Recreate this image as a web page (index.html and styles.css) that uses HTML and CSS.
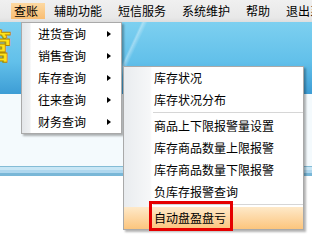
FILE: index.html
```html
<!DOCTYPE html>
<html lang="zh-CN">
<head>
<meta charset="utf-8">
<link rel="stylesheet" href="styles.css">
</head>
<body>
<div class="page">
  <div class="menubar">
    <span class="mi active">查账</span>
    <span class="mi">辅助功能</span>
    <span class="mi">短信服务</span>
    <span class="mi">系统维护</span>
    <span class="mi">帮助</span>
    <span class="mi">退出系统</span>
  </div>
  <div class="banner"><div class="logo-clip"><span class="logo">管</span></div></div>
  <div class="content"></div>
  <div class="bar"></div>

  <div class="menu m1">
    <div class="row sub">进货查询</div>
    <div class="row sub">销售查询</div>
    <div class="row sub">库存查询</div>
    <div class="row sub">往来查询</div>
    <div class="row sub">财务查询</div>
  </div>

  <div class="menu m2">
    <div class="row">库存状况</div>
    <div class="row">库存状况分布</div>
    <div class="sep"></div>
    <div class="row">商品上下限报警量设置</div>
    <div class="row">库存商品数量上限报警</div>
    <div class="row">库存商品数量下限报警</div>
    <div class="row">负库存报警查询</div>
    <div class="sep"></div>
    <div class="row hl">自动盘盈盘亏</div>
  </div>

  <div class="mark"></div>
</div>
</body>
</html>
```

FILE: styles.css
```css
html, body {
  margin: 0;
  padding: 0;
  background: #ffffff;
}
.page {
  position: relative;
  width: 312px;
  height: 238px;
  overflow: hidden;
  font-family: "Noto Sans CJK SC", "Noto Sans", sans-serif;
  font-size: 12px;
  color: #000;
}
.menubar {
  height: 22px;
  box-sizing: border-box;
  padding: 3px 0 0 11px;
  display: flex;
  gap: 6px;
  white-space: nowrap;
  overflow: hidden;
  background: linear-gradient(#f0f0f0, #e8e8e8 80%, #dedede);
}
.mi {
  flex: none;
  height: 16px;
  line-height: 16px;
  padding: 0 7px 0 3px;
}
.mi.active {
  background: linear-gradient(#fdd9a2, #f9bd72);
}
.banner {
  height: 72px;
  overflow: hidden;
  background:
    linear-gradient(115deg, transparent 0, transparent 128px, rgba(255,255,255,0.35) 130px, transparent 134px),
    linear-gradient(#7dd0f0 0%, #62c0ea 55%, #3d9dd5 100%);
}
.logo-clip {
  width: 20px;
  height: 44px;
  overflow: hidden;
  margin-top: 3px;
}
.logo {
  display: block;
  margin-left: -22px;
  font-size: 34px;
  line-height: 40px;
  font-weight: bold;
  color: #ffe21a;
  -webkit-text-stroke: 1px #b08a00;
}
.content {
  height: 72px;
  background: #f4fafd;
}
.bar {
  height: 10px;
  background: linear-gradient(#84bcd6 0, #84bcd6 1px, #c8e6f5 1px, #c8e6f5 4px, #afd7ee 4px, #afd7ee 7px, #79b7d7 7px);
}
.menu {
  position: absolute;
  box-sizing: border-box;
  border: 1px solid #a9a9a9;
  box-shadow: 2px 2px 2px rgba(0, 0, 0, 0.3);
  display: flex;
  flex-direction: column;
}
.m1 {
  left: 21px;
  top: 22px;
  width: 101px;
  background: linear-gradient(to right, #e3e6e9 0, #eef0f2 8px, #ffffff 9px);
}
.m2 {
  left: 123px;
  top: 66px;
  width: 181px;
  background: linear-gradient(to right, #e9ecef 0, #f6f7f8 26px, #ffffff 28px);
}
.row {
  position: relative;
  height: 22px;
  line-height: 22px;
  white-space: nowrap;
}
.m1 .row {
  padding-left: 16px;
}
.m2 .row {
  padding-left: 30px;
}
.row.sub::after {
  content: "";
  position: absolute;
  right: 10px;
  top: 8px;
  border-left: 4px solid #000;
  border-top: 3.5px solid transparent;
  border-bottom: 3.5px solid transparent;
}
.sep {
  height: 4px;
  margin-left: 29px;
  box-sizing: border-box;
  border-top: 1px solid transparent;
  background: linear-gradient(#d6d6d6 0, #d6d6d6 1px, #ffffff 1px, #ffffff 2px, transparent 2px);
  background-clip: content-box;
}
.row.hl {
  background: linear-gradient(#fee9c9, #fcc57d);
}
.mark {
  position: absolute;
  left: 149px;
  top: 201px;
  width: 84px;
  height: 30px;
  box-sizing: border-box;
  border: 3px solid #e50000;
}
```
